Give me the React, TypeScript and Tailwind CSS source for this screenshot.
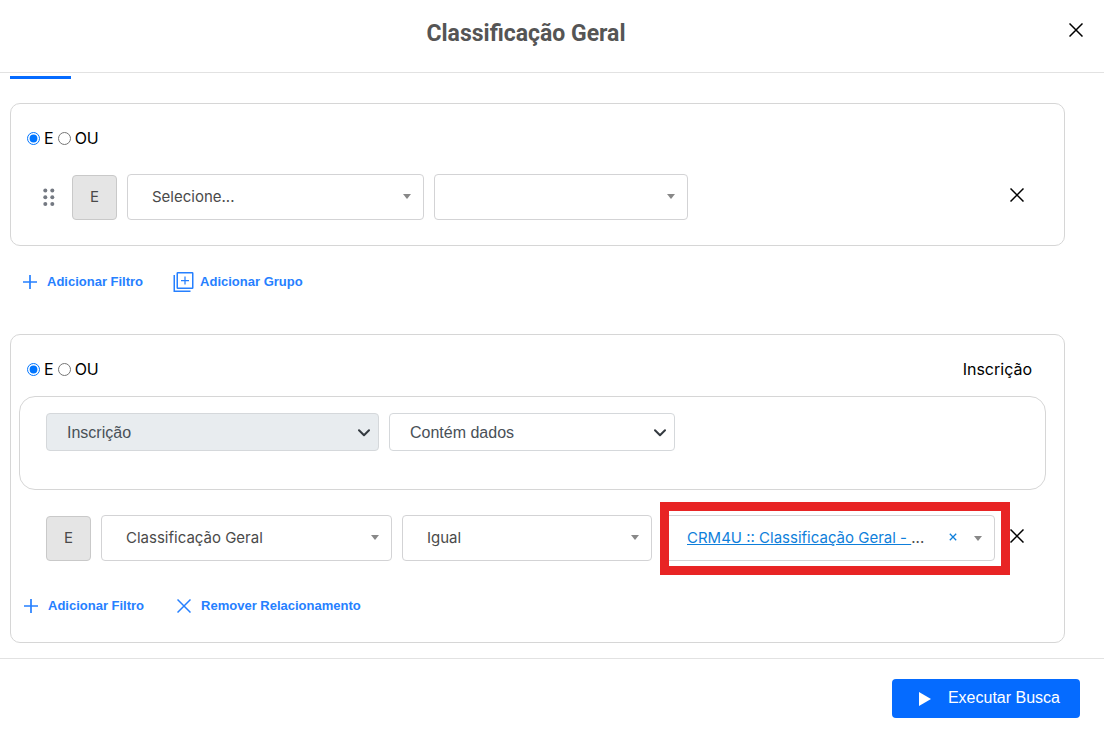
import type { ReactNode } from "react";

function CrossIcon({ className = "" }: { className?: string }) {
  return (
    <svg viewBox="0 0 14 14" className={className} fill="none" stroke="currentColor" strokeWidth="1.5" aria-hidden="true">
      <path d="M0.5 0.5L13.5 13.5M13.5 0.5L0.5 13.5" />
    </svg>
  );
}

function ClearIcon() {
  return (
    <svg viewBox="0 0 8 8" className="size-2" fill="none" stroke="currentColor" strokeWidth="1.3" aria-hidden="true">
      <path d="M0.8 0.8L7.2 7.2M7.2 0.8L0.8 7.2" />
    </svg>
  );
}

function PlusIcon() {
  return (
    <svg viewBox="0 0 14 14" className="size-[14px]" fill="none" stroke="currentColor" strokeWidth="1.7" aria-hidden="true">
      <path d="M7 0V14M0 7H14" />
    </svg>
  );
}

function GroupIcon() {
  return (
    <svg viewBox="0 0 21 20" className="h-5 w-[21px]" fill="none" stroke="currentColor" aria-hidden="true">
      <rect x="4.25" y="0.75" width="15.5" height="15.5" rx="0.5" strokeWidth="1.5" />
      <path d="M1.25 3V19.25H17.5" strokeWidth="1.5" />
      <path d="M12 4.5V12.5M8 8.5H16" strokeWidth="1.25" />
    </svg>
  );
}

function Grip() {
  return (
    <svg viewBox="0 0 12 19" className="h-[19px] w-3" fill="#747982" aria-hidden="true">
      {[2.5, 9.2, 16].map((y) => (
        <g key={y}>
          <circle cx="2.3" cy={y} r="2" />
          <circle cx="9.3" cy={y} r="2" />
        </g>
      ))}
    </svg>
  );
}

function Caret() {
  return (
    <svg viewBox="0 0 8 5" className="h-[5px] w-2" fill="#888888" aria-hidden="true">
      <path d="M0 0H8L4 5Z" />
    </svg>
  );
}

function Picker({ label, value, width }: { label: string; value: string; width: string }) {
  return (
    <div className={`relative ${width}`}>
      <select
        aria-label={label}
        className="h-[46px] w-full appearance-none rounded border border-[#d3d3d5] bg-white pr-8 pl-6 text-[15px] text-[#4a4a4a]"
      >
        <option>{value}</option>
      </select>
      <span className="pointer-events-none absolute inset-y-0 right-[13px] flex items-center pb-0.5">
        <Caret />
      </span>
    </div>
  );
}

function FormSelect({ label, value, width, disabled }: { label: string; value: string; width: string; disabled?: boolean }) {
  return (
    <div className={`relative ${width}`}>
      <select
        aria-label={label}
        disabled={disabled}
        className="h-[38px] w-full appearance-none rounded border border-[#d5d8db] bg-white pt-0.5 pr-8 pl-5 font-['Liberation_Sans',sans-serif] text-[#495057] opacity-100 disabled:bg-[#e8ecef]"
      >
        <option>{value}</option>
      </select>
      <svg
        viewBox="0 0 12 8"
        className="pointer-events-none absolute top-4 right-[9px] h-2 w-3"
        fill="none"
        stroke="#343a40"
        strokeWidth="2"
        strokeLinecap="round"
        strokeLinejoin="round"
        aria-hidden="true"
      >
        <path d="M1 1.2L6 6.2L11 1.2" />
      </svg>
    </div>
  );
}

function Operator({ name }: { name: string }) {
  return (
    <div className="flex items-center text-black">
      <label className="flex items-center gap-1">
        <input type="radio" name={name} defaultChecked className="size-[13px] accent-[#0075ff]" />E
      </label>
      <label className="ml-1 flex items-center gap-1">
        <input type="radio" name={name} className="size-[13px]" />
        OU
      </label>
    </div>
  );
}

function OperatorBadge() {
  return (
    <button type="button" className="size-[45px] rounded border border-[#c9c9c9] bg-[#e5e5e5] text-[15px] text-[#4a4a4a]">
      E
    </button>
  );
}

function Action({ icon, children }: { icon: ReactNode; children: ReactNode }) {
  return (
    <button type="button" className="flex items-center font-['Liberation_Sans',sans-serif] text-[13px] font-bold text-[#2680ff]">
      {icon}
      {children}
    </button>
  );
}

export default function App() {
  return (
    <div className="flex min-h-screen flex-col bg-white font-['Inter','DejaVu_Sans',sans-serif] text-base leading-6">
      <header className="flex h-[73px] items-center border-b border-[#e2e2e2] px-5 pb-2">
        <h1 className="flex-1 pt-1 pr-9 text-center font-['Roboto',sans-serif] text-[23px] font-bold text-[#555555]">
          Classificação Geral
        </h1>
        <button type="button" aria-label="Fechar" className="p-px pb-1.5 text-black">
          <CrossIcon className="size-[14px]" />
        </button>
      </header>

      <main className="flex-1 pt-[3px] pr-[39px] pb-[15px] pl-[10px]">
        <div className="h-[3px] w-[61px] bg-[#056bff]" />

        <section className="mt-6 rounded-[10px] border border-[#d6d6d6] px-4 pt-[22px] pb-[25px]">
          <Operator name="grupo-principal" />
          <div className="mt-6 flex items-center gap-[10px] pl-4">
            <span className="mr-[7px]">
              <Grip />
            </span>
            <OperatorBadge />
            <Picker label="Campo" value="Selecione..." width="w-[297px]" />
            <Picker label="Condição" value="" width="w-[254px]" />
            <button type="button" aria-label="Remover filtro" className="mr-6 ml-auto pb-1 text-black">
              <CrossIcon className="size-[14px]" />
            </button>
          </div>
        </section>

        <div className="flex h-[88px] items-start gap-[30px] pt-6 pl-[13px]">
          <Action icon={<span className="mr-[10px]"><PlusIcon /></span>}>Adicionar Filtro</Action>
          <Action icon={<span className="mr-1.5"><GroupIcon /></span>}>Adicionar Grupo</Action>
        </div>

        <section className="rounded-[10px] border border-[#d6d6d6] pt-[22px] pb-6">
          <div className="flex items-center justify-between pr-8 pl-4 text-black">
            <Operator name="grupo-inscricao" />
            <span>Inscrição</span>
          </div>

          <div className="mt-[15px] mr-[18px] ml-2 flex h-[94px] items-start gap-[10px] rounded-2xl border border-[#d6d6d6] pt-4 pl-[26px]">
            <FormSelect label="Relacionamento" value="Inscrição" width="w-[333px]" disabled />
            <FormSelect label="Tipo de dados" value="Contém dados" width="w-[286px]" />
          </div>

          <div className="mt-[25px] flex items-center gap-[10px] pl-[35px]">
            <OperatorBadge />
            <Picker label="Campo" value="Classificação Geral" width="w-[291px]" />
            <Picker label="Condição" value="Igual" width="w-[250px]" />
            <div className="relative flex h-[46px] w-[333px] items-center rounded border border-[#d3d3d5] pr-3 pl-6 text-[15px] text-[#4a4a4a]">
              <span className="whitespace-pre">
                <a href="#classificacao" className="text-[#0f7fdb] underline">{"CRM4U :: Classificação Geral - "}</a>...
              </span>
              <button type="button" aria-label="Limpar seleção" className="ml-auto pb-0.5 text-[#0f7fdb]">
                <ClearIcon />
              </button>
              <button type="button" aria-label="Abrir opções" className="ml-[17px]">
                <Caret />
              </button>
              <div className="pointer-events-none absolute -top-[14px] -right-4 -bottom-[15px] -left-[3px] border-[9px] border-[#e82424]" />
            </div>
            <button type="button" aria-label="Remover filtro" className="mr-10 ml-auto pb-1 text-black">
              <CrossIcon className="size-[14px]" />
            </button>
          </div>

          <div className="mt-[33px] flex items-center gap-[33px] pl-[13px]">
            <Action icon={<span className="mr-[10px]"><PlusIcon /></span>}>Adicionar Filtro</Action>
            <Action icon={<CrossIcon className="mr-[10px] size-[14px]" />}>Remover Relacionamento</Action>
          </div>
        </section>
      </main>

      <footer className="flex justify-end border-t border-[#e2e2e2] px-6 pt-5 pb-[14px]">
        <button
          type="button"
          className="flex h-[39px] items-center gap-[17px] rounded bg-[#056bff] pr-5 pb-0.5 pl-[27px] font-['Liberation_Sans',sans-serif] text-white"
        >
          <svg viewBox="0 0 12 14" className="mt-0.5 h-[14px] w-3" fill="currentColor" aria-hidden="true">
            <path d="M0 0L12 7L0 14Z" />
          </svg>
          Executar Busca
        </button>
      </footer>
    </div>
  );
}
